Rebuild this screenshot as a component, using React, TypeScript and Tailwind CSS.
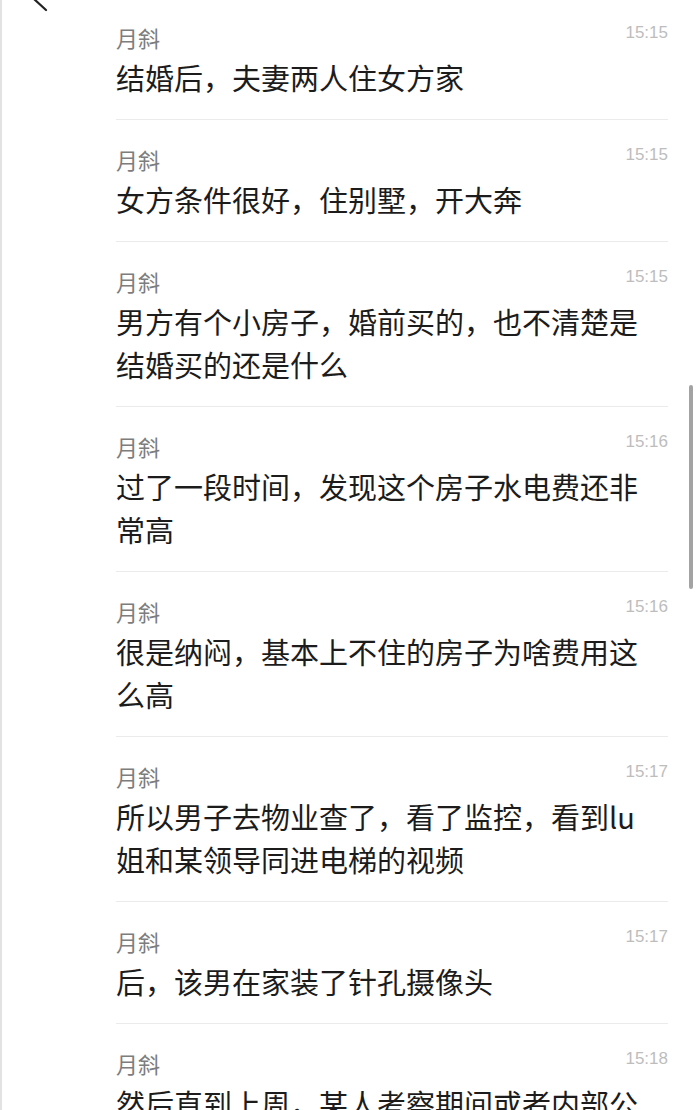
import React from "react";

const rows: { time: string; text: string }[] = [
  { time: "15:15", text: "结婚后，夫妻两人住女方家" },
  { time: "15:15", text: "女方条件很好，住别墅，开大奔" },
  { time: "15:15", text: "男方有个小房子，婚前买的，也不清楚是结婚买的还是什么" },
  { time: "15:16", text: "过了一段时间，发现这个房子水电费还非常高" },
  { time: "15:16", text: "很是纳闷，基本上不住的房子为啥费用这么高" },
  { time: "15:17", text: "所以男子去物业查了，看了监控，看到lu姐和某领导同进电梯的视频" },
  { time: "15:17", text: "后，该男在家装了针孔摄像头" },
  { time: "15:18", text: "然后直到上周，某人考察期间或者内部公示的时候，男方把视频发了出来" },
];

export default function App() {
  return (
    <div
      className="relative h-[1110px] w-[700px] overflow-hidden bg-white"
      style={{ fontFamily: '"Noto Sans CJK SC", "Noto Sans", sans-serif' }}
    >
      {/* left edge line */}
      <div className="absolute left-0 top-0 h-full w-[2px] bg-[#e2e2e2]" />
      {/* back arrow fragment */}
      <svg className="absolute left-[28px] top-[-14px]" width="26" height="26" viewBox="0 0 26 26">
        <path d="M18 2 L6 13 L18 24" fill="none" stroke="#222" strokeWidth="2.2" strokeLinecap="round" />
      </svg>
      {/* scrollbar */}
      <div className="absolute left-[689px] top-[385px] h-[204px] w-[4px] rounded-full bg-[#a3a3a3]" />

      <div className="ml-[116px] mr-[32px] mt-[-2px] flex flex-col">
        {rows.map((r, i) => (
          <div key={i} className="border-b border-[#ebebeb] pb-[20px] pt-[24px]">
            <div className="flex items-start justify-between">
              <span className="text-[22px] leading-[30px] text-[#7d7d7d]">月斜</span>
              <span
                className="text-[17px] leading-[22px] text-[#bdbdbd]"
                style={{ fontFamily: '"Liberation Sans", Arial, sans-serif' }}
              >
                {r.time}
              </span>
            </div>
            <div className="mt-[4px] w-[535px] text-[29px] leading-[43px] text-[#1c1c1c]">{r.text}</div>
          </div>
        ))}
      </div>
    </div>
  );
}
